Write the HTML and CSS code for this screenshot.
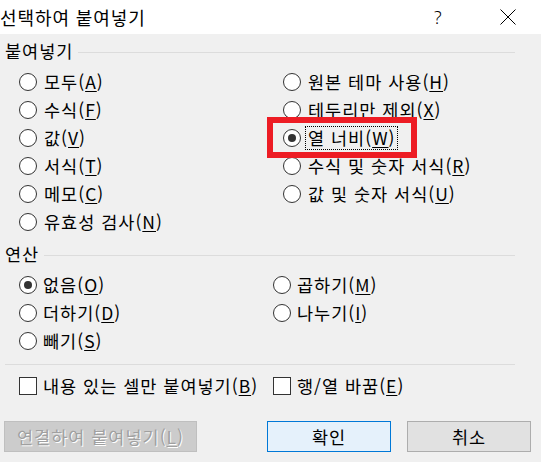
FILE: index.html
```html
<!DOCTYPE html>
<html lang="ko">
<head>
<meta charset="utf-8">
<link rel="stylesheet" href="styles.css">
</head>
<body>
<div class="dialog">
  <div class="titlebar">
    <span class="title">선택하여 붙여넣기</span>
    <span class="help">?</span>
    <span class="close"><svg width="16" height="16" viewBox="0 0 16 16"><path d="M0.5 0.5 L15.5 15.5 M15.5 0.5 L0.5 15.5" stroke="#000" stroke-width="1" fill="none"/></svg></span>
  </div>

  <div class="group-head"><span class="group-label">붙여넣기</span><i class="rule"></i></div>
  <div class="grid paste">
    <label class="opt"><span class="radio"></span><span class="txt">모두(<u>A</u>)</span></label>
    <label class="opt"><span class="radio"></span><span class="txt">수식(<u>F</u>)</span></label>
    <label class="opt"><span class="radio"></span><span class="txt">값(<u>V</u>)</span></label>
    <label class="opt"><span class="radio"></span><span class="txt">서식(<u>T</u>)</span></label>
    <label class="opt"><span class="radio"></span><span class="txt">메모(<u>C</u>)</span></label>
    <label class="opt"><span class="radio"></span><span class="txt">유효성 검사(<u>N</u>)</span></label>
    <label class="opt"><span class="radio"></span><span class="txt">원본 테마 사용(<u>H</u>)</span></label>
    <label class="opt"><span class="radio"></span><span class="txt">테두리만 제외(<u>X</u>)</span></label>
    <label class="opt"><span class="radio on"></span><span class="txt focus">열 너비(<u>W</u>)</span></label>
    <label class="opt"><span class="radio"></span><span class="txt">수식 및 숫자 서식(<u>R</u>)</span></label>
    <label class="opt"><span class="radio"></span><span class="txt">값 및 숫자 서식(<u>U</u>)</span></label>
  </div>

  <div class="group-head ops-head"><span class="group-label">연산</span><i class="rule"></i></div>
  <div class="grid ops">
    <label class="opt"><span class="radio on"></span><span class="txt">없음(<u>O</u>)</span></label>
    <label class="opt"><span class="radio"></span><span class="txt">더하기(<u>D</u>)</span></label>
    <label class="opt"><span class="radio"></span><span class="txt">빼기(<u>S</u>)</span></label>
    <label class="opt"><span class="radio"></span><span class="txt">곱하기(<u>M</u>)</span></label>
    <label class="opt"><span class="radio"></span><span class="txt">나누기(<u>I</u>)</span></label>
  </div>

  <div class="sep"></div>

  <div class="checks">
    <label class="chk"><span class="box"></span><span class="txt">내용 있는 셀만 붙여넣기(<u>B</u>)</span></label>
    <label class="chk"><span class="box"></span><span class="txt">행/열 바꿈(<u>E</u>)</span></label>
  </div>

  <div class="buttons">
    <button class="btn disabled">연결하여 붙여넣기(<u>L</u>)</button>
    <span class="spacer"></span>
    <button class="btn default">확인</button>
    <button class="btn">취소</button>
  </div>

  <div class="highlight"></div>
</div>
</body>
</html>
```

FILE: styles.css
```css
* { box-sizing: border-box; }
html, body { margin: 0; padding: 0; }
body {
  width: 541px;
  height: 462px;
  overflow: hidden;
  background: #f0f0f0;
  font-family: "Noto Sans CJK KR", "Noto Sans", sans-serif;
  font-size: 17.5px;
  letter-spacing: 1px;
  color: #000;
}
.dialog { position: relative; width: 541px; height: 462px; }

.titlebar {
  height: 34px;
  background: #fff;
  display: flex;
  align-items: center;
}
.title { font-size: 18px; letter-spacing: 0.9px; flex: 1; line-height: 1; }
.help { font-size: 18px; width: 10px; margin-right: 56px; line-height: 1; font-family: "Noto Sans", sans-serif; font-weight: 300; letter-spacing: 0; }
.close { width: 16px; height: 16px; margin-right: 25px; display: flex; }

.group-head {
  height: 34px;
  display: flex;
  align-items: center;
  padding-left: 5px;
  padding-right: 26px;
}
.ops-head { height: 35px; }
.group-label { line-height: 1; }
.rule { flex: 1; height: 1px; background: #dcdcdc; margin-left: 5px; margin-top: 3px; }

.grid {
  display: grid;
  grid-auto-flow: column;
  grid-auto-rows: 28px;
  padding-left: 19px;
}
.paste { grid-template-rows: repeat(6, 28px); grid-template-columns: 264px 1fr; }
.ops { grid-template-rows: repeat(3, 28px); grid-template-columns: 254px 1fr; }

.opt { display: flex; align-items: center; }
.radio {
  width: 18px;
  height: 18px;
  border: 1px solid #333;
  border-radius: 50%;
  background: #fff;
  display: flex;
  align-items: center;
  justify-content: center;
  flex: none;
}
.radio.on::after {
  content: "";
  width: 8px;
  height: 8px;
  border-radius: 50%;
  background: #333;
}
.txt { margin-left: 7px; line-height: 1; }
.ops .txt { margin-left: 6px; }
.opt .focus { outline: 1px dotted #000; outline-offset: 2px; }
u { text-decoration: underline; text-underline-offset: 2px; text-decoration-thickness: 1px; }

.sep { height: 1px; background: #dcdcdc; margin: 9px 26px 0 5px; }

.checks {
  height: 42px;
  display: grid;
  grid-template-columns: 254px 1fr;
  padding-left: 19px;
  align-items: center;
}
.chk { display: flex; align-items: center; }
.box { width: 18px; height: 18px; border: 1px solid #333; background: #fff; flex: none; }
.chk .txt { margin-left: 6px; }

.buttons {
  display: flex;
  margin-top: 14px;
  padding-left: 4px;
  padding-right: 10px;
  gap: 16px;
}
.spacer { flex: 1; }
.btn {
  height: 31px;
  width: 124px;
  border: 1px solid #adadad;
  background: #e1e1e1;
  font-family: inherit;
  font-size: 17.5px;
  letter-spacing: 1px;
  color: #000;
  padding: 0;
  line-height: 1;
}
.btn.default { border-color: #0078d7; background: #e5f1fb; }
.btn.disabled {
  width: 193px;
  background: #cccccc;
  border-color: #bfbfbf;
  color: #a0a0a0;
  text-shadow: 1px 1px 0 #fff;
}

.highlight {
  position: absolute;
  left: 267px;
  top: 117px;
  width: 150px;
  height: 41px;
  border: 6px solid #ed1c24;
}
```
